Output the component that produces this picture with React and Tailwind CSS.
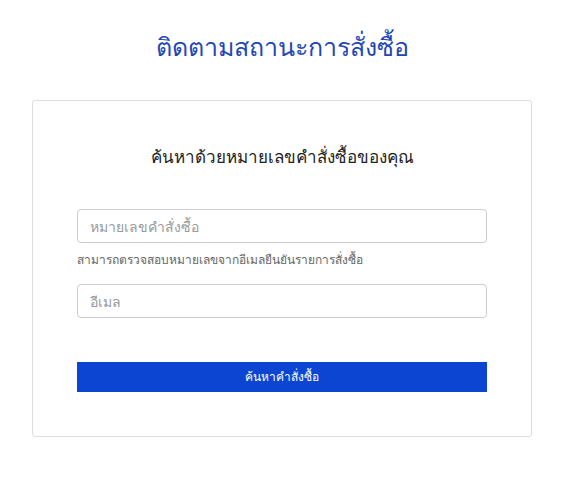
export default function App() {
  return (
    <div className="min-h-[477px] w-[573px] bg-white font-['Tahoma','Noto_Sans','DejaVu_Sans',sans-serif]">
      <div className="ml-[32px] w-[500px] pt-[26px]">
        <h1 className="text-center text-[25px] leading-[40px] text-[#1f47b6]">
          ติดตามสถานะการสั่งซื้อ
        </h1>

        <div className="mt-[34px] h-[337px] rounded-[3px] border border-[#dedede] px-[44px] pt-[44px]">
          <h2 className="text-center text-[17px] leading-[24px] text-[#222]">
            ค้นหาด้วยหมายเลขคำสั่งซื้อของคุณ
          </h2>

          <form className="mt-[40px] flex flex-col" onSubmit={(e) => e.preventDefault()}>
            <input
              type="text"
              placeholder="หมายเลขคำสั่งซื้อ"
              className="h-[34px] w-full rounded-[4px] border border-[#ccc] px-[12px] text-[14px] text-[#333] placeholder:text-[#999] outline-none"
            />
            <p className="mt-[8px] text-[12px] leading-[18px] text-[#666]">
              สามารถตรวจสอบหมายเลขจากอีเมลยืนยันรายการสั่งซื้อ
            </p>
            <input
              type="email"
              placeholder="อีเมล"
              className="mt-[15px] h-[34px] w-full rounded-[4px] border border-[#ccc] px-[12px] text-[14px] text-[#333] placeholder:text-[#999] outline-none"
            />
            <button
              type="submit"
              className="mt-[44px] h-[30px] w-full bg-[#0b45d1] text-[12px] text-white"
            >
              ค้นหาคำสั่งซื้อ
            </button>
          </form>
        </div>
      </div>
    </div>
  );
}
